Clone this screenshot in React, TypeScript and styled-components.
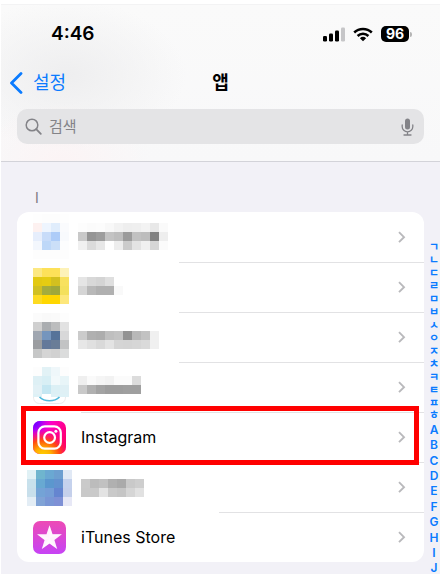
import React from "react";
import styled, { createGlobalStyle } from "styled-components";

const blue = "#0a7bff";

const GlobalStyle = createGlobalStyle`
  *, *::before, *::after { box-sizing: border-box; }
  html, body { margin: 0; background: #f2f1f7; }
  body, button, input { font-family: Inter, "Noto Sans CJK KR", sans-serif; }
  button { margin: 0; padding: 0; border: 0; background: none; color: inherit; text-align: left; cursor: pointer; }
  svg { display: block; }
`;

const Page = styled.div`
  border-top: 4px solid #fff;
  border-left: 1px solid #fff;
  background: #f2f1f7;
  color: #000;
`;

const Header = styled.header`
  padding: 13px 16px 17px;
  border-top: 1px solid #f3f3f4;
  border-bottom: 1px solid #d3d3d9;
  background:
    radial-gradient(ellipse 90px 60px at 60px 100%, #fff0f180, #fff0f100),
    radial-gradient(ellipse 120px 75px at 65px 70px, #eeeeef, #eeeeef00),
    linear-gradient(#fafafa, #f8f8f9);
`;

const StatusBar = styled.div`
  display: flex;
  align-items: center;
  justify-content: space-between;
  height: 32px;
  padding: 0 12px 0 34px;
`;

const Time = styled.time`
  font-size: 19px;
  font-weight: 600;
  line-height: 24px;
`;

const StatusIcons = styled.div`
  display: flex;
  align-items: center;
  gap: 8px;
`;

const Battery = styled.div`
  display: flex;
  align-items: center;
  gap: 1px;
  &::after {
    content: "";
    width: 2px;
    height: 5px;
    border-radius: 0 2px 2px 0;
    background: #b5b5b5;
  }
`;

const BatteryLevel = styled.span`
  width: 28px;
  border-radius: 5px;
  background: #000;
  color: #fff;
  font-size: 14px;
  font-weight: 700;
  line-height: 16px;
  text-align: center;
`;

const NavBar = styled.nav`
  display: grid;
  grid-template-columns: 1fr auto 1fr;
  align-items: center;
  height: 42px;
  margin: 12px 0 5px;
`;

const BackButton = styled.button`
  display: flex;
  align-items: center;
  justify-self: start;
  gap: 10px;
  margin-left: -8px;
  color: ${blue};
  font-size: 18px;
  line-height: 24px;
`;

const Title = styled.h1`
  margin: 0;
  font-size: 18px;
  font-weight: 700;
  line-height: 24px;
`;

const SearchField = styled.label`
  display: flex;
  align-items: center;
  gap: 7px;
  height: 35px;
  padding: 0 10px 0 8px;
  border-radius: 10px;
  background: #e4e4e6;
  color: #838388;
`;

const SearchInput = styled.input`
  flex: 1;
  min-width: 0;
  padding: 0;
  border: 0;
  outline: 0;
  background: none;
  color: #000;
  font-size: 15px;
  line-height: 24px;
  &::placeholder { color: #838388; opacity: 1; }
`;

const Content = styled.main`
  display: grid;
  grid-template-columns: minmax(0, 1fr) 12px;
  column-gap: 4px;
  padding-left: 16px;
`;

const SectionTitle = styled.h2`
  margin: 0;
  padding: 25px 18px 4px;
  color: #7c7c82;
  font-size: 14px;
  font-weight: 400;
  line-height: 21px;
`;

const AppList = styled.ul`
  margin: 0;
  padding: 0;
  list-style: none;
  border-radius: 12px;
  background: #fff;
`;

const AppItem = styled.li<{ $lineStart: number }>`
  position: relative;
  &:not(:first-child)::before {
    content: "";
    position: absolute;
    top: 0;
    right: 0;
    left: ${(p) => p.$lineStart}px;
    height: 1px;
    background: #e2e2e4;
  }
`;

const AppButton = styled.button`
  display: grid;
  grid-template-columns: 61px minmax(0, 1fr) 8px;
  align-items: center;
  width: 100%;
  height: 50px;
  padding-right: 18px;
`;

const IconSlot = styled.span`
  padding-left: 16px;
`;

const AppName = styled.span`
  padding-left: 3px;
  font-size: 16px;
  line-height: 24px;
`;

const Highlight = styled.span`
  position: absolute;
  z-index: 1;
  inset: -6px 5px -3px 4px;
  border: 5px solid #f00;
  pointer-events: none;
`;

const IndexBar = styled.nav`
  display: flex;
  flex-direction: column;
  padding-top: 79px;
`;

const IndexGroup = styled.div<{ $height: number; $size: number; $weight: number }>`
  display: flex;
  flex-direction: column;
  height: ${(p) => p.$height}px;
  font-size: ${(p) => p.$size}px;
  font-weight: ${(p) => p.$weight};
  line-height: 12px;
`;

const IndexLink = styled.a`
  display: flex;
  flex: 1;
  min-height: 0;
  align-items: center;
  justify-content: center;
  color: ${blue};
  text-decoration: none;
`;

const MosaicSvg = styled.svg`
  overflow: visible;
`;

type MosaicData = { x: number; y: number; rows: string[] };

const CELL = 9;

function Mosaic({ data, width, children }: { data: MosaicData; width: number; children?: React.ReactNode }) {
  return (
    <MosaicSvg width={width} height="50" shapeRendering="crispEdges" aria-hidden="true">
      {data.rows.flatMap((row, r) =>
        row.split(" ").map((c, i) => (
          <rect
            key={`${r}-${i}`}
            x={data.x + i * CELL}
            y={data.y + r * CELL}
            width={CELL}
            height={CELL}
            fill={`#${c.length === 2 ? c + c + c : c}`}
          />
        ))
      )}
      {children}
    </MosaicSvg>
  );
}

function InstagramIcon() {
  return (
    <svg width="33" height="33" viewBox="0 0 33 33" aria-hidden="true">
      <defs>
        <linearGradient id="ig-base" x1="0" y1="0" x2="1" y2="0.5">
          <stop offset="0" stopColor="#d000ff" />
          <stop offset="0.5" stopColor="#ff00c0" />
          <stop offset="1" stopColor="#ff0070" />
        </linearGradient>
        <radialGradient id="ig-violet" cx="0" cy="0" r="0.55">
          <stop offset="0" stopColor="#5a00ff" />
          <stop offset="0.35" stopColor="#8a00ff" />
          <stop offset="1" stopColor="#d800f0" stopOpacity="0" />
        </radialGradient>
        <radialGradient id="ig-warm" cx="0.3" cy="1.08" r="0.85">
          <stop offset="0" stopColor="#ffd600" />
          <stop offset="0.3" stopColor="#ffb000" />
          <stop offset="0.6" stopColor="#ff4a10" />
          <stop offset="1" stopColor="#ff0069" stopOpacity="0" />
        </radialGradient>
      </defs>
      <rect width="33" height="33" rx="7" fill="url(#ig-base)" />
      <rect width="33" height="33" rx="7" fill="url(#ig-violet)" />
      <rect width="33" height="33" rx="7" fill="url(#ig-warm)" />
      <g fill="none" stroke="#fff" strokeWidth="2.2">
        <rect x="5.4" y="5.4" width="22.4" height="22.2" rx="6.4" />
        <circle cx="16.6" cy="16.5" r="5.4" />
      </g>
      <circle cx="22.9" cy="10.2" r="1.5" fill="#fff" />
    </svg>
  );
}

function StoreIcon() {
  return (
    <svg width="33" height="33" viewBox="0 0 33 33" aria-hidden="true">
      <defs>
        <linearGradient id="store" x1="0" y1="0" x2="0" y2="1">
          <stop offset="0" stopColor="#ed4bb5" />
          <stop offset="1" stopColor="#c643f5" />
        </linearGradient>
      </defs>
      <rect width="33" height="33" rx="7" fill="url(#store)" />
      <path
        d="M16.5 4.3 19.5 13.3 28.9 13.3 21.4 18.9 24.2 28 16.5 22.5 8.8 28 11.6 18.9 4.1 13.3 13.5 13.3Z"
        fill="#fff2fd"
      />
      <path d="M16.5 4.3V17L4.1 13.3 11.6 18.9 16.5 17 8.8 28 16.5 22.5 24.2 28 16.5 17 28.9 13.3 19.5 13.3Z" fill="#fff" fillOpacity="0.45" />
    </svg>
  );
}

const Chevron = () => (
  <svg width="8" height="14" viewBox="0 0 8 14" fill="none" aria-hidden="true">
    <path d="M1 2.2 6 7.2 1 12.2" stroke="#b9b9bc" strokeWidth="1.9" />
  </svg>
);

type AppEntry = {
  id: string;
  name?: string;
  icon?: React.ReactNode;
  iconPixels?: MosaicData;
  namePixels?: MosaicData;
  lineStart: number;
  highlighted?: boolean;
};

const apps: AppEntry[] = [
  {
    id: "a",
    lineStart: 0,
    iconPixels: {
      x: 16, y: 2,
      rows: ["fe fd fd fe", "fdf1f0 eef5fe e0edfc fafbfd", "e6eefc c8dcf9 adccf8 f8fafd", "f3f7fd bed8f8 cbdff8 fcfdfe", "fd fd fd fd"],
    },
    namePixels: {
      x: 0, y: 11,
      rows: ["fd fb fc f8 f2 ee ef f3 e8 fa", "c9 95 9d c3 bd 9b c1 bd 82 ee", "f0 db e7 fe ed cb e3 f0 d6 fb"],
    },
  },
  {
    id: "b",
    lineStart: 162,
    iconPixels: {
      x: 16, y: 6,
      rows: ["fce882 fde159 fde159 fdf2b8", "e3c912 e5cc12 d3c01f f8e15f", "d1c022 a4ac3d 9fa83a f4e05c", "fddb22 ffd700 ffd700 fde77b"],
    },
    namePixels: { x: 0, y: 15, rows: ["e5 d8 d4 df", "d5 b8 b0 b0 f9"] },
  },
  {
    id: "c",
    lineStart: 162,
    iconPixels: {
      x: 16, y: 1,
      rows: ["fb f9 fa fd", "cf aaadb0 bcbdbe e2", "a0a7b1 7595bd 567399 d8d8d9", "9b9da0 64799a 6a7d97 c2c3c4", "c6c7c7 d5 d1 dbdcdc"],
    },
    namePixels: { x: 0, y: 19, rows: ["cb b0 ad bf c3 93 b8 c2 f0", "e7 e0 d9 e3 d5 d4 d6 da f0"] },
  },
  {
    id: "d",
    lineStart: 162,
    iconPixels: {
      x: 16, y: 5,
      rows: ["fd e2f2f6 eff7fa fd", "def0f5 d8eff5 f2f9fb e8f5f8", "e2f1f6 c5e7f2 dcf0f5 dff0f5"],
    },
    namePixels: { x: 0, y: 14, rows: ["ef fa f5 f2 fb fb dc", "c9 b0 a3 9d 9d 9f 9f"] },
  },
  { id: "e", name: "Instagram", icon: <InstagramIcon />, lineStart: 64, highlighted: true },
  {
    id: "f",
    lineStart: 64,
    iconPixels: {
      x: 10, y: 8,
      rows: ["e0f1f5 6fb5ce 6aa8d2 6d9fd0 e1e9f5", "c8e1ec 68a9d2 5b97ce 6392cf c5d2ed", "c8dfeb 74a3d6 759dd6 6585d0 c5d0eb", "e3edf5 80a3d6 7996d5 7e90d5 e7e8f6"],
    },
    namePixels: { x: 3, y: 17, rows: ["ca bc c1 b0 aa c9 ce", "c9 c9 e3 c9 c5 d5 e1"] },
  },
  { id: "g", name: "iTunes Store", icon: <StoreIcon />, lineStart: 202 },
];

const hangul = [..."ㄱㄴㄷㄹㅁㅂㅅㅇㅈㅊㅋㅌㅍㅎ"];
const latin = [..."ABCDEFGHIJ"];

function SmileEdge() {
  return (
    <g shapeRendering="geometricPrecision" fill="none">
      <path d="M16 32h9v3h-9zM34 32h18v3H34z" fill="#def1f6" />
      <path d="M16.5 35c0 4 2.5 6.5 6 6.5h20c3.5 0 6-2.5 6-6.5" stroke="#eaeaec" />
      <path d="M22.5 35c5 5 15 5 20 0" stroke="#4fb9db" strokeWidth="1.6" />
    </g>
  );
}

export default function App() {
  return (
    <>
      <GlobalStyle />
      <Page>
        <Header>
          <StatusBar>
            <Time>4:46</Time>
            <StatusIcons>
              <svg width="23" height="16" viewBox="0 0 23 16" aria-hidden="true">
                <rect x="1" y="10" width="4" height="5.5" rx="1.2" />
                <rect x="7" y="7.5" width="4" height="8" rx="1.2" />
                <rect x="13" y="4.5" width="4" height="11" rx="1.2" />
                <rect x="19" y="1.5" width="4" height="14" rx="1.2" fill="#c6c6c8" />
              </svg>
              <svg width="20" height="15" viewBox="0 0 20 15" fill="none" stroke="#000" strokeWidth="2.5" aria-hidden="true">
                <path d="M1.2 5.5a12.6 12.6 0 0 1 17.6 0" />
                <path d="M4.6 9a7.7 7.7 0 0 1 10.8 0" />
                <path d="M10 14.3 6.9 11.3a4.5 4.5 0 0 1 6.2 0Z" fill="#000" stroke="none" />
              </svg>
              <Battery>
                <BatteryLevel>96</BatteryLevel>
              </Battery>
            </StatusIcons>
          </StatusBar>
          <NavBar>
            <BackButton type="button">
              <svg width="14" height="22" viewBox="0 0 14 22" fill="none" aria-hidden="true">
                <path d="M12 1.5 2.5 11l9.5 9.5" stroke={blue} strokeWidth="2.8" strokeLinecap="round" strokeLinejoin="round" />
              </svg>
              설정
            </BackButton>
            <Title>앱</Title>
          </NavBar>
          <SearchField>
            <svg width="17" height="17" viewBox="0 0 17 17" fill="none" stroke="currentColor" strokeWidth="1.5" aria-hidden="true">
              <circle cx="7" cy="7" r="5.8" />
              <path d="m11.2 11.2 4.6 4.6" strokeLinecap="round" strokeWidth="1.8" />
            </svg>
            <SearchInput type="text" placeholder="검색" />
            <svg width="13" height="18" viewBox="0 0 13 18" fill="none" stroke="currentColor" strokeWidth="1.3" aria-hidden="true">
              <rect x="4" y="0.5" width="5" height="11" rx="2.5" fill="currentColor" stroke="none" />
              <path d="M1.2 7v1.8a5.3 5 0 0 0 10.6 0V7M6.5 14v2.8M3 17h7" strokeLinecap="round" />
            </svg>
          </SearchField>
        </Header>
        <Content>
          <section>
            <SectionTitle>I</SectionTitle>
            <AppList>
              {apps.map((app) => (
                <AppItem key={app.id} $lineStart={app.lineStart}>
                  <AppButton type="button">
                    {app.iconPixels ? (
                      <Mosaic data={app.iconPixels} width={61}>
                        {app.id === "d" && <SmileEdge />}
                      </Mosaic>
                    ) : (
                      <IconSlot>{app.icon}</IconSlot>
                    )}
                    {app.namePixels ? <Mosaic data={app.namePixels} width={90} /> : <AppName>{app.name}</AppName>}
                    <Chevron />
                  </AppButton>
                  {app.highlighted && <Highlight />}
                </AppItem>
              ))}
            </AppList>
          </section>
          <IndexBar>
            <IndexGroup $height={181} $size={11} $weight={700}>
              {hangul.map((c) => (
                <IndexLink key={c} href={`#${c}`}>{c}</IndexLink>
              ))}
            </IndexGroup>
            <IndexGroup $height={154} $size={12} $weight={600}>
              {latin.map((c) => (
                <IndexLink key={c} href={`#${c}`}>{c}</IndexLink>
              ))}
            </IndexGroup>
          </IndexBar>
        </Content>
      </Page>
    </>
  );
}
